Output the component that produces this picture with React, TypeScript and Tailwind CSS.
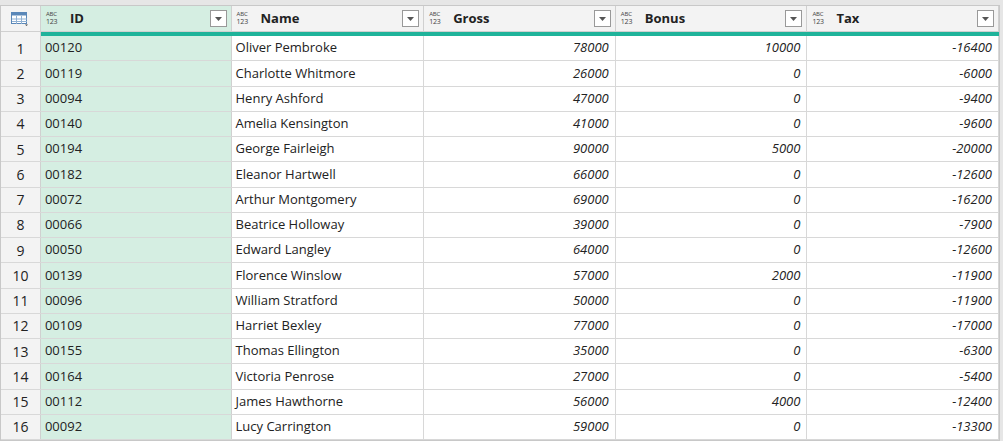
const rows: [string,string,number,number,number][] = [
["00120","Oliver Pembroke",78000,10000,-16400],
["00119","Charlotte Whitmore",26000,0,-6000],
["00094","Henry Ashford",47000,0,-9400],
["00140","Amelia Kensington",41000,0,-9600],
["00194","George Fairleigh",90000,5000,-20000],
["00182","Eleanor Hartwell",66000,0,-12600],
["00072","Arthur Montgomery",69000,0,-16200],
["00066","Beatrice Holloway",39000,0,-7900],
["00050","Edward Langley",64000,0,-12600],
["00139","Florence Winslow",57000,2000,-11900],
["00096","William Stratford",50000,0,-11900],
["00109","Harriet Bexley",77000,0,-17000],
["00155","Thomas Ellington",35000,0,-6300],
["00164","Victoria Penrose",27000,0,-5400],
["00112","James Hawthorne",56000,4000,-12400],
["00092","Lucy Carrington",59000,0,-13300],
];
const cols = [
  { n: "ID", w: "w-[191px]" },
  { n: "Name", w: "w-[193px]" },
  { n: "Gross", w: "w-[192px]" },
  { n: "Bonus", w: "w-[192px]" },
  { n: "Tax", w: "w-[192px]" },
];
function TypeIcon() {
  return (
    <div className="flex flex-col text-[#444] mr-[8px] w-[16px] shrink-0">
      <span className="text-[6px] leading-[7px] tracking-tight">ABC</span>
      <span className="text-[7px] leading-[8px] tracking-tight">123</span>
    </div>
  );
}
function Drop() {
  return (
    <div className="ml-auto w-[17px] h-[17px] border border-[#999] bg-white flex items-center justify-center shrink-0">
      <svg width="7" height="4" viewBox="0 0 7 4"><path d="M0 0h7L3.5 4z" fill="#555"/></svg>
    </div>
  );
}
export default function App() {
  return (
    <div className="w-[1003px] h-[441px] bg-[#e6e6e6] pt-[5px] text-[13px] text-[#222]" style={{fontFamily: '"Open Sans","Liberation Sans",sans-serif'}}>
      <div className="w-[1000px] bg-white border border-[#c8c8c8]">
        <div className="flex h-[26px] bg-[#f3f3f3] border-b border-[#d0d0d0]">
          <div className="w-[40px] flex items-center justify-center border-r border-[#d0d0d0]">
            <svg width="18" height="14" viewBox="0 0 18 14"><rect x="0.5" y="0.5" width="15" height="11" fill="#fff" stroke="#5a87b8"/><rect x="0.5" y="0.5" width="15" height="3" fill="#5a87b8"/><path d="M5.5 4v8M10.5 4v8M1 7h15M1 9.5h15" stroke="#8fb0d3"/><path d="M14 12.5h3l-1.5 1.5z" fill="#444"/></svg>
          </div>
          {cols.map((c, i) => (
            <div key={c.n} className={`${c.w} flex items-center pl-[5px] pr-[4px] border-r border-[#d0d0d0] ${i === 0 ? "bg-[#d5eee2]" : ""}`}>
              <TypeIcon />
              <span className="font-bold text-[13px]">{c.n}</span>
              <Drop />
            </div>
          ))}
        </div>
        <div className="flex h-[4px]">
          <div className="w-[40px] bg-[#f3f3f3] border-r border-[#d0d0d0]" />
          <div className="flex-1 bg-[#1fb39a]" />
        </div>
        {rows.map((r, i) => (
          <div key={i} className="flex h-[25.25px] border-b border-[#d8d8d8]">
            <div className="w-[40px] flex items-center justify-center bg-[#f3f3f3] border-r border-[#d0d0d0] text-[14px]">{i + 1}</div>
            <div className="w-[191px] flex items-center pl-[4px] bg-[#d5eee2] border-r border-[#d0d0d0]">{r[0]}</div>
            <div className="w-[193px] flex items-center pl-[4px] border-r border-[#d8d8d8]">{r[1]}</div>
            {[r[2], r[3], r[4]].map((v, j) => (
              <div key={j} className="w-[192px] flex items-center justify-end pr-[6px] italic border-r border-[#d8d8d8]">{v}</div>
            ))}
          </div>
        ))}
      </div>
    </div>
  );
}
